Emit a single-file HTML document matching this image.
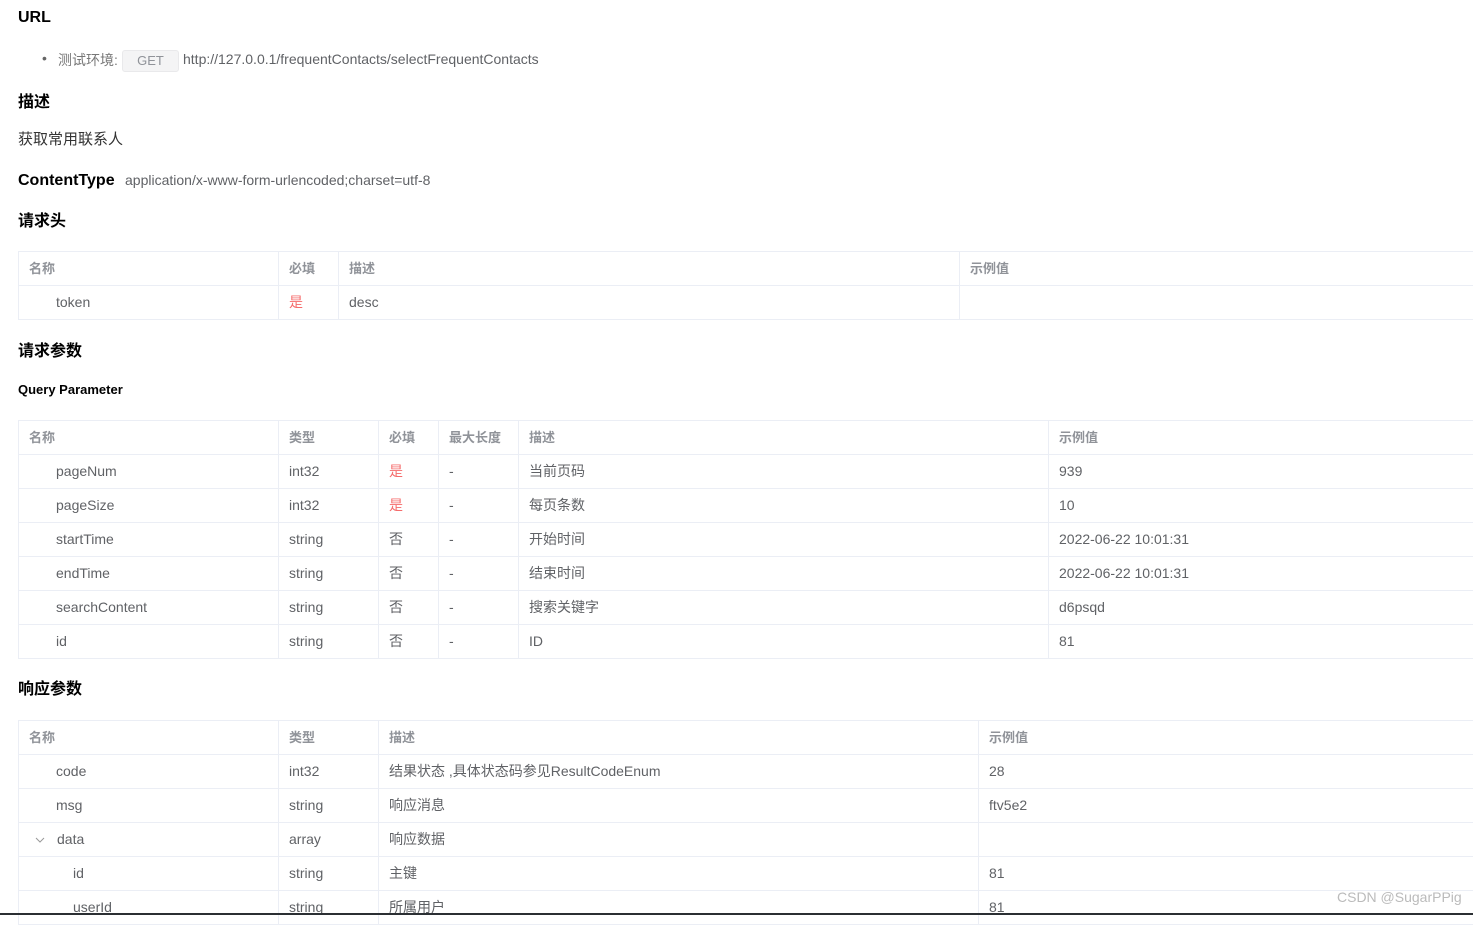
<!DOCTYPE html>
<html><head><meta charset="utf-8"><style>
*{margin:0;padding:0;box-sizing:border-box}
body{width:1473px;height:915px;overflow:hidden;background:#fff;font-family:"Liberation Sans","Noto Sans CJK SC",sans-serif;font-size:14px;color:#606266;position:relative}
.a{position:absolute;white-space:nowrap}
h{position:absolute;font-weight:bold;color:#000;font-size:16px;white-space:nowrap}
table{position:absolute;left:18px;border-collapse:collapse;table-layout:fixed}
td{height:34px;border:1px solid #ebeef5;padding:0 10px 2px;white-space:nowrap;color:#606266}
tr.hd td{color:#909399;font-weight:bold;font-size:13px}
.r{color:#f56c6c}
.i1{padding-left:37px}.i2{padding-left:54px}
</style></head><body>
<h style="left:18px;top:9px">URL</h>
<div class="a" style="left:42px;top:50px;color:#666">•</div>
<div class="a" style="left:58px;top:50px;color:#777">测试环境:</div>
<div class="a" style="left:122px;top:50px;width:57px;height:22px;background:#f4f4f5;border:1px solid #e9e9eb;border-radius:3px;color:#909399;font-size:13px;text-align:center;line-height:20px">GET</div>
<div class="a" style="left:183px;top:51px">http://127.0.0.1/frequentContacts/selectFrequentContacts</div>
<h style="left:18px;top:88px">描述</h>
<div class="a" style="left:18px;top:128px;color:#333;font-size:15px">获取常用联系人</div>
<h style="left:18px;top:172px">ContentType</h>
<div class="a" style="left:125px;top:172px">application/x-www-form-urlencoded;charset=utf-8</div>
<h style="left:18px;top:207px">请求头</h>
<table style="top:251px;width:1470px"><colgroup><col style="width:260px"><col style="width:60px"><col style="width:621px"><col></colgroup>
<tr class="hd"><td>名称</td><td>必填</td><td>描述</td><td>示例值</td></tr>
<tr><td class="i1">token</td><td class="r">是</td><td>desc</td><td></td></tr></table>
<h style="left:18px;top:337px">请求参数</h>
<div class="a" style="left:18px;top:382px;font-weight:bold;color:#000;font-size:13px">Query Parameter</div>
<table style="top:420px;width:1470px"><colgroup><col style="width:260px"><col style="width:100px"><col style="width:60px"><col style="width:80px"><col style="width:530px"><col></colgroup>
<tr class="hd"><td>名称</td><td>类型</td><td>必填</td><td>最大长度</td><td>描述</td><td>示例值</td></tr>
<tr><td class="i1">pageNum</td><td>int32</td><td class="r">是</td><td>-</td><td>当前页码</td><td>939</td></tr>
<tr><td class="i1">pageSize</td><td>int32</td><td class="r">是</td><td>-</td><td>每页条数</td><td>10</td></tr>
<tr><td class="i1">startTime</td><td>string</td><td>否</td><td>-</td><td>开始时间</td><td>2022-06-22 10:01:31</td></tr>
<tr><td class="i1">endTime</td><td>string</td><td>否</td><td>-</td><td>结束时间</td><td>2022-06-22 10:01:31</td></tr>
<tr><td class="i1">searchContent</td><td>string</td><td>否</td><td>-</td><td>搜索关键字</td><td>d6psqd</td></tr>
<tr><td class="i1">id</td><td>string</td><td>否</td><td>-</td><td>ID</td><td>81</td></tr></table>
<h style="left:18px;top:675px">响应参数</h>
<table style="top:720px;width:1470px"><colgroup><col style="width:260px"><col style="width:100px"><col style="width:600px"><col></colgroup>
<tr class="hd"><td>名称</td><td>类型</td><td>描述</td><td>示例值</td></tr>
<tr><td class="i1">code</td><td>int32</td><td>结果状态 ,具体状态码参见ResultCodeEnum</td><td>28</td></tr>
<tr><td class="i1">msg</td><td>string</td><td>响应消息</td><td>ftv5e2</td></tr>
<tr><td style="padding-left:16px"><svg width="10" height="6" viewBox="0 0 10 6" style="margin-right:12px;vertical-align:middle"><path d="M1 1l4 4 4-4" fill="none" stroke="#999" stroke-width="1"/></svg>data</td><td>array</td><td>响应数据</td><td></td></tr>
<tr><td class="i2">id</td><td>string</td><td>主键</td><td>81</td></tr>
<tr><td class="i2">userId</td><td>string</td><td>所属用户</td><td>81</td></tr></table>
<div class="a" style="left:1337px;top:889px;color:#bbb;font-size:14px">CSDN @SugarPPig</div>
<div class="a" style="left:0;top:913px;width:1473px;height:2px;background:#2b2f33"></div>
</body></html>
